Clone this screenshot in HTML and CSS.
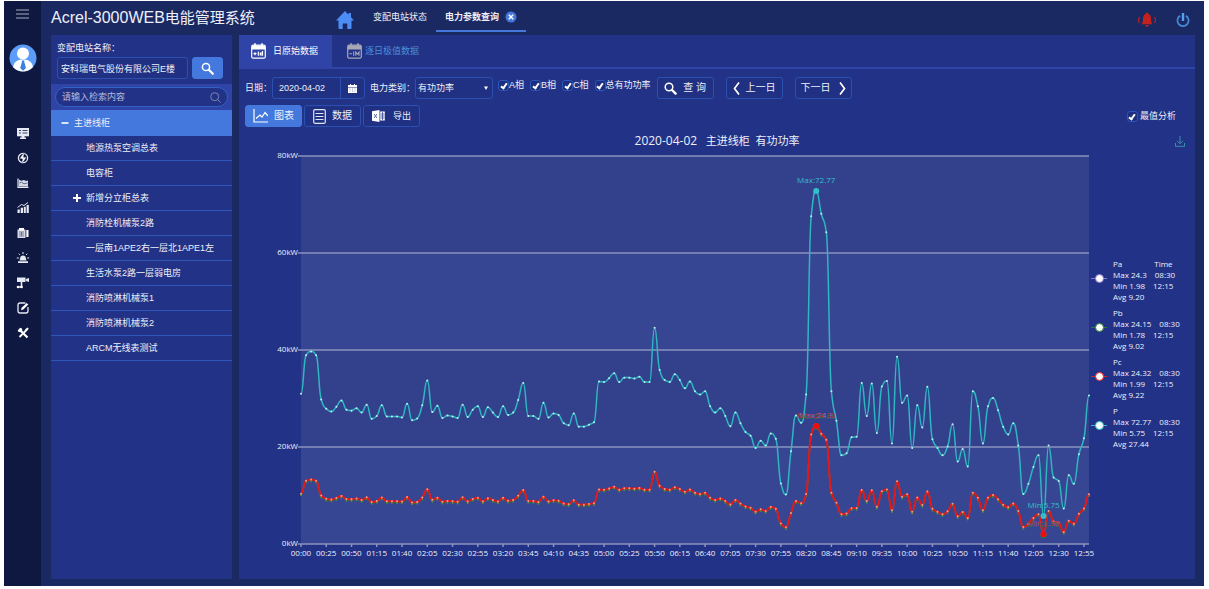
FILE: index.html
```html
<!DOCTYPE html>
<html lang="zh-CN">
<head>
<meta charset="utf-8">
<title>Acrel-3000WEB电能管理系统</title>
<link rel="stylesheet" href="styles.css">
</head>
<body>
<div class="app">
  <nav class="rail" aria-label="主导航">
    <button class="rail-menu" type="button" aria-label="菜单"><svg width="14" height="10" viewBox="0 0 14 10"><path d="M0 1h13M0 5h13M0 9h13" stroke="#a5abc0" stroke-width="1.2"/></svg></button>
    <a class="avatar" href="#" aria-label="用户"><svg width="28" height="28" viewBox="0 0 28 28"><defs><clipPath id="face"><circle cx="14" cy="14" r="13.5"/></clipPath></defs><circle cx="14" cy="14" r="13.5" fill="#5b9cf8"/><g clip-path="url(#face)"><circle cx="14" cy="9.500" r="6" fill="#fff"/><path d="M4 25c0-7 4-9.500 10-9.500s10 2.500 10 9.500l-4 4H8z" fill="#fff"/><path d="M13 16.500h2.200l.2 2 1.600 5.500-2.900 2.800-2.900-2.800 1.600-5.500z" fill="#3f7fe0"/></g></svg></a>
    <ul class="rail-list">
      <li><a href="#" aria-label="监控"><svg viewBox="0 0 14 14"><path d="M1 2h12v8.300H1z" fill="#e6e9f2"/><path d="M3 4.500h2M3 7h2M6.500 4.500h5M6.500 7h5" stroke="#39446e" stroke-width="1"/><path d="M5.500 10h3v1.500h1.500V13H4v-1.500h1.500z" fill="#e6e9f2"/></svg></a></li>
      <li><a href="#" aria-label="电力"><svg viewBox="0 0 14 14"><circle cx="7" cy="7" r="4.600" fill="none" stroke="#e6e9f2" stroke-width="1.300"/><path d="M8.300 1 3.500 7.800h3L5.700 13l4.800-6.800h-3z" fill="#fff" stroke="#0e1840" stroke-width=".3"/></svg></a></li>
      <li><a href="#" aria-label="曲线"><svg viewBox="0 0 14 14"><path d="M2 2.500v8.800h10.500" fill="none" stroke="#e6e9f2" stroke-width="1.200"/><path d="M3 3.500l2 1.200 3-.7 2 1 2-.5v6H3z" fill="#d4d8e5"/><path d="m3.500 7 2-.8 2.500 1.600L11.500 7" stroke="#48527a" fill="none" stroke-width=".8"/></svg></a></li>
      <li><a href="#" aria-label="统计"><svg viewBox="0 0 14 14"><path d="M1.500 8.500h2.300V12H1.500zM4.700 6.700H7V12H4.700zM7.800 5.700h2V12h-2zM10.600 4h2.200v8h-2.200z" fill="#e6e9f2"/><path d="m1.500 6.500 4-3 2.500 1L12 1.500" fill="none" stroke="#e6e9f2"/></svg></a></li>
      <li><a href="#" aria-label="报表"><svg viewBox="0 0 14 14"><path d="M1.500 3.500h8V12h-8z" fill="#d4d8e5"/><path d="M3 2h5v2.500H3zM10.300 4h2.200v7h-2.200z" fill="#fff"/><path d="M3 6h5M3 8h5M3 10h5M5.500 6v4" stroke="#525c83" stroke-width=".7"/></svg></a></li>
      <li><a href="#" aria-label="报警"><svg viewBox="0 0 14 14"><path d="M3.500 9.500 4.600 5.500Q7 3.500 9.400 5.500l1.100 4zM2 10.300h10V12H2z" fill="#e6e9f2"/><path d="M7 1v2M2.700 2.700l1.200 1.200M11.300 2.700l-1.200 1.200M.8 7h2M11.200 7h2" stroke="#e6e9f2"/></svg></a></li>
      <li><a href="#" aria-label="视频"><svg viewBox="0 0 14 14"><path d="M1 1.500h8.500v4.500H1zM10 3l3-1v4l-3-1z" fill="#e6e9f2"/><path d="M5.500 6v5H2" fill="none" stroke="#e6e9f2" stroke-width="1.600"/><circle cx="2" cy="11" r="1.300" fill="#fff"/><circle cx="5.500" cy="11" r="1.300" fill="#fff"/></svg></a></li>
      <li><a href="#" aria-label="编辑"><svg viewBox="0 0 14 14"><path d="M9.500 2H4Q2 2 2 4v6q0 2 2 2h6q2 0 2-2V6" fill="none" stroke="#e6e9f2" stroke-width="1.300"/><path d="m5 9.300.6-2.500L10.700 2l1.600 1.600-5 5z" fill="#fff"/></svg></a></li>
      <li><a href="#" aria-label="工具"><svg viewBox="0 0 14 14"><path d="m4 4 7.500 7.500" stroke="#fff" stroke-width="2.200"/><path d="M10.500 4 3.500 11" stroke="#fff" stroke-width="1.800"/><circle cx="4" cy="4" r="2.300" fill="#fff"/><path d="m1.300 3.700 2.400-2.400" stroke="#0e1840" stroke-width="1.400"/><path d="m9 3.500 2.500-2 1.200 1.200-2 2.500z" fill="#fff"/></svg></a></li>
    </ul>
  </nav>

  <div class="shell">
    <header class="topbar">
      <h1 class="brand">Acrel-3000WEB<span class="brand-cn">电能管理系统</span></h1>
      <div class="topbar-main">
        <a class="home" href="#" aria-label="首页"><svg width="18" height="18" viewBox="0 0 18 18"><path d="M9 0 0 9.500h2.500V17q0 1 1 1h3.200v-5.500h4.600V18h3.200q1 0 1-1V9.500H18l-3-3.200V2h-2.500v1.700z" fill="#4c8df6"/></svg></a>
        <nav class="pages">
          <a class="page" href="#">变配电站状态</a>
          <a class="page page-current" href="#">电力参数查询<svg width="12" height="12" viewBox="0 0 12 12"><circle cx="6" cy="6" r="5.500" fill="#4478dc"/><path d="m3.800 3.800 4.400 4.400M8.200 3.800 3.800 8.200" stroke="#fff" stroke-width="1.500"/></svg></a>
        </nav>
        <div class="topbar-tools">
          <button type="button" class="bare" aria-label="告警"><svg width="20" height="16" viewBox="0 0 20 16"><path d="M10 .5q1.300 0 1.300 1.200Q14 2.700 14 6.500q0 4 1.300 5.700H4.700Q6 10.500 6 6.500q0-3.800 2.700-4.800Q8.700.5 10 .5zM8.300 13h3.400q-.5 2-1.700 2t-1.700-2z" fill="#c2211d"/><path d="M2.300 5q-1.600 3 0 6M17.700 5q1.600 3 0 6" fill="none" stroke="#c2211d" stroke-width="1.200"/></svg></button>
          <button type="button" class="bare" aria-label="退出"><svg width="14" height="16" viewBox="0 0 14 16"><path d="M4.200 3.700a5.600 5.600 0 1 0 5.600 0" fill="none" stroke="#478bd8" stroke-width="1.700"/><path d="M7 1v8" stroke="#56a0ee" stroke-width="2.400"/></svg></button>
        </div>
      </div>
    </header>

    <div class="content">
      <aside class="side">
        <div class="station">
          <label for="station">变配电站名称：</label>
          <div class="station-row">
            <input id="station" class="field" type="text" value="安科瑞电气股份有限公司E楼">
            <button type="button" class="btn btn-on station-go" aria-label="搜索"><svg width="13" height="13" viewBox="0 0 13 13"><circle cx="5" cy="5" r="3.600" fill="none" stroke="#fff" stroke-width="1.500"/><path d="m7.800 7.800 4 4" stroke="#fff" stroke-width="2.200" stroke-linecap="round"/></svg></button>
          </div>
        </div>
        <div class="filter">
          <div class="filter-box">
            <input type="text" aria-label="检索" placeholder="请输入检索内容">
            <svg width="11" height="11" viewBox="0 0 11 11"><circle cx="4.700" cy="4.700" r="4" fill="none" stroke="#7d86a8"/><path d="m7.500 7.500 3 3" stroke="#7d86a8"/></svg>
          </div>
        </div>
        <ul class="tree">
          <li class="tree-root"><button type="button"><svg width="8" height="8" viewBox="0 0 8 8"><path d="M.5 4h7" stroke="#fff" stroke-width="1.600"/></svg>主进线柜</button></li>
          <li><button type="button">地源热泵空调总表</button></li>
          <li><button type="button">电容柜</button></li>
          <li class="tree-parent"><button type="button"><svg width="8" height="8" viewBox="0 0 8 8"><path d="M0 4h8M4 0v8" stroke="#fff" stroke-width="2"/></svg>新增分立柜总表</button></li>
          <li><button type="button">消防栓机械泵2路</button></li>
          <li><button type="button">一层南1APE2右一层北1APE1左</button></li>
          <li><button type="button">生活水泵2路一层弱电房</button></li>
          <li><button type="button">消防喷淋机械泵1</button></li>
          <li><button type="button">消防喷淋机械泵2</button></li>
          <li><button type="button">ARCM无线表测试</button></li>
        </ul>
      </aside>

      <main class="main">
        <div class="tabs">
          <button type="button" class="tab tab-on"><svg width="15" height="16" viewBox="0 0 15 16"><rect x=".7" y="2.200" width="13.600" height="13" rx="1.500" fill="none" stroke="#fff" stroke-width="1.200"/><path d="M1 2.500h13v4H1zM3.200.3h1.600v3H3.200zM10.200.3h1.600v3h-1.600z" fill="#fff"/><path d="M2.500 10.700h3M4 9.200v3M7.300 8.500v4.200M11.500 8v4.700M11.500 12H9.300v-1.800h2.200" fill="none" stroke="#fff" stroke-width="1.200"/></svg>日原始数据</button>
          <button type="button" class="tab"><svg width="15" height="16" viewBox="0 0 15 16"><rect x=".7" y="2.200" width="13.600" height="13" rx="1.500" fill="none" stroke="#a9a9b6" stroke-width="1.200"/><path d="M1 2.500h13v4H1zM3.200.3h1.600v3H3.200zM10.200.3h1.600v3h-1.600z" fill="#a9a9b6"/><path d="M2.500 10.700h2.500M6.700 8.500v4.200M8.800 12.700V9l1.600 2L12 9v3.700" fill="none" stroke="#a9a9b6" stroke-width="1.100"/></svg>逐日极值数据</button>
        </div>

        <form class="query" onsubmit="return false">
          <label for="day">日期：</label>
          <div class="date">
            <input id="day" type="text" value="2020-04-02">
            <button type="button" aria-label="选择日期"><svg width="9" height="9" viewBox="0 0 9 9"><path d="M0 1h9v2H0zM0 3.500h9V9H0zM2 0h1v1H2zM6 0h1v1H6z" fill="#fff"/><path d="M1.500 5h6M1.500 7h6" stroke="#8f9ac8" stroke-dasharray="1 1.500"/></svg></button>
          </div>
          <label class="kind-label" for="kind">电力类别：</label>
          <div class="kind">
            <select id="kind"><option>有功功率</option></select>
            <svg width="4" height="4" viewBox="0 0 4 4"><path d="M0 .5h4L2 4z" fill="#fff"/></svg>
          </div>
          <div class="checks">
            <label><input type="checkbox" checked>A相</label>
            <label><input type="checkbox" checked>B相</label>
            <label><input type="checkbox" checked>C相</label>
            <label><input type="checkbox" checked>总有功功率</label>
          </div>
          <div class="actions">
            <button type="submit" class="btn"><svg width="13" height="13" viewBox="0 0 13 13"><circle cx="5" cy="5" r="3.800" fill="none" stroke="#fff" stroke-width="1.500"/><path d="m8 8 3.600 3.600" stroke="#fff" stroke-width="2.400" stroke-linecap="round"/></svg>查 询</button>
            <button type="button" class="btn"><svg width="7" height="13" viewBox="0 0 7 13"><path d="M6 .5 1.500 6.500 6 12.500" fill="none" stroke="#fff" stroke-width="1.700"/></svg>上一日</button>
            <button type="button" class="btn btn-next">下一日<svg width="7" height="13" viewBox="0 0 7 13"><path d="m1 .5 4.500 6L1 12.500" fill="none" stroke="#fff" stroke-width="1.700"/></svg></button>
          </div>
        </form>

        <div class="views">
          <button type="button" class="btn btn-on btn-big"><svg width="15" height="14" viewBox="0 0 15 14"><path d="M1 0v13h14" fill="none" stroke="#fff" stroke-width="1.200"/><path d="m3 9.500 4-3.500 2 2 3-4.500L15 7" fill="none" stroke="#fff" stroke-width="1.200"/></svg>图表</button>
          <button type="button" class="btn btn-big"><svg width="13" height="15" viewBox="0 0 13 15"><rect x=".7" y=".7" width="11.600" height="13.600" rx="1.200" fill="none" stroke="#dfe3f3" stroke-width="1.200"/><path d="M2.500 4.500h8M2.500 7.500h8M2.500 10.500h8" stroke="#dfe3f3"/></svg>数据</button>
          <button type="button" class="btn btn-export"><svg width="13" height="12" viewBox="0 0 13 12"><path d="M0 1.200 7.500 0v12L0 10.800zM8.200 1.500h4.600v9H8.200z" fill="#fff"/><path d="m2 4 3 4M5 4 2 8M8.500 4h4M8.500 6h4M8.500 8h4M10.500 2v8" stroke="#3a4a98" stroke-width=".8"/></svg>导出</button>
          <label class="extremes"><input type="checkbox" checked>最值分析</label>
        </div>

        <div class="chart-head">
          <h2><span class="chart-date">2020-04-02</span>&nbsp;&nbsp; 主进线柜&nbsp;&nbsp;有功功率</h2>
          <button type="button" class="bare" aria-label="保存图片"><svg width="10" height="11" viewBox="0 0 10 11"><path d="M5 0v7.500M2 4.800l3 3 3-3M.5 7v3.300h9V7" fill="none" stroke="#3a8fae"/></svg></button>
        </div>
        <div class="chart-body">
          <div class="plot"><svg id="plot" role="img" aria-label="有功功率曲线"></svg></div>
          <div class="legend">
            <section class="series series-pa"><i></i><p>Pa<span class="time-head">Time</span></p><p>Max 24.3<span>08:30</span></p><p>Min 1.98<span>12:15</span></p><p>Avg 9.20</p></section>
            <section class="series series-pb"><i></i><p>Pb</p><p>Max 24.15<span>08:30</span></p><p>Min 1.78<span>12:15</span></p><p>Avg 9.02</p></section>
            <section class="series series-pc"><i></i><p>Pc</p><p>Max 24.32<span>08:30</span></p><p>Min 1.99<span>12:15</span></p><p>Avg 9.22</p></section>
            <section class="series series-p"><i></i><p>P</p><p>Max 72.77<span>08:30</span></p><p>Min 5.75<span>12:15</span></p><p>Avg 27.44</p></section>
          </div>
        </div>
      </main>
    </div>
  </div>
</div>
<script src="chart.js"></script>
</body>
</html>
```
FILE: styles.css
```css
*, ::before { box-sizing: border-box; }
html, body { height: 100%; }
body {
  margin: 0;
  padding: 1px 5px 3px 4px;
  background: #fff;
  color: #eef0f9;
  font: 9px/12px "Liberation Sans", "Noto Sans CJK SC", sans-serif;
}
ul { list-style: none; margin: 0; padding: 0; }
h1, h2, p { margin: 0; font-weight: normal; }
a { color: inherit; text-decoration: none; }
button, input, select { font: inherit; color: inherit; margin: 0; }
button { cursor: pointer; white-space: nowrap; }
svg { flex: none; display: block; }
.bare { padding: 0; border: 0; background: none; }

.app { display: flex; min-height: 100%; background: #1b2963; }

.rail {
  flex: none;
  width: 37px;
  background: #0e1840;
  display: flex;
  flex-direction: column;
  align-items: center;
}
.rail-menu { border: 0; padding: 0; background: none; margin-top: 8px; }
.avatar { margin-top: 25px; }
.rail-list { margin-top: 48px; }
.rail-list a { display: flex; align-items: center; height: 25px; }
.rail-list svg { width: 14px; height: 14px; }

.shell { flex: 1; min-width: 0; display: flex; flex-direction: column; }
.topbar { display: flex; height: 34px; padding: 0 14px 0 10px; }
.brand { width: 285px; font-size: 16px; line-height: 34px; white-space: nowrap; }
.brand-cn { font-size: 15px; }
.topbar-main { flex: 1; display: flex; align-items: flex-start; }
.home { margin-top: 10px; }
.pages { display: flex; margin-left: 10px; }
.page { display: flex; align-items: center; gap: 6px; height: 31px; padding: 0 9px; }
.page-current { border-bottom: 2px solid #4478dc; padding-top: 2px; font-weight: bold; }
.topbar-tools { margin: 11px 0 0 auto; display: flex; gap: 19px; }

.content { flex: 1; display: flex; gap: 7px; padding: 0 9px 7px 10px; }
.side { flex: none; width: 181px; background: #223286; }
.station { padding: 7px 9px 5px 6px; }
.station label { display: block; line-height: 12px; }
.station-row { display: flex; gap: 4px; margin-top: 3px; }
.field, .btn, .date, .kind {
  height: 22px;
  border: 1px solid #2c50b0;
  border-radius: 3px;
  background: #203082;
}
.field { flex: 1; min-width: 0; padding: 0 3px; }
.btn { display: flex; align-items: center; justify-content: center; gap: 6px; width: 57px; padding: 0; }
.btn-on { background: #4478dc; border-color: #4478dc; }
.station-go { width: 31px; }
.filter { padding: 3px 4px; background: #3043a7; }
.filter-box {
  display: flex;
  align-items: center;
  height: 20px;
  padding: 0 6px;
  border: 1px solid #2f62c4;
  border-radius: 10px;
  background: #223286;
}
.filter-box input { flex: 1; min-width: 0; padding: 0; border: 0; background: none; outline: 0; }
.filter-box input::placeholder { color: #b4bbdc; opacity: 1; }
.tree li { height: 25px; border-bottom: 1px solid #2f56b9; padding-left: 35px; }
.tree button { display: flex; align-items: center; gap: 5px; height: 24px; padding: 0; border: 0; background: none; }
.tree .tree-root { height: 26px; padding-left: 10px; background: #4478dc; border: 0; }
.tree-root button { height: 26px; }
.tree .tree-parent { padding-left: 22px; }

.main { flex: 1; min-width: 0; display: flex; flex-direction: column; background: #223286; }
.tabs { display: flex; height: 34px; border-bottom: 2px solid #3043a7; }
.tab { display: flex; align-items: center; gap: 7px; padding: 0 14px 0 12px; border: 0; background: none; color: #4a90d8; }
.tab + .tab { gap: 3px; padding-left: 15px; }
.tab-on { color: #fff; background: #3043a7; }

.query { display: flex; align-items: center; height: 22px; margin: 8px 6px 0; white-space: nowrap; }
.date { display: flex; width: 93px; }
.date input { flex: 1; min-width: 0; padding: 0 6px; border: 0; background: none; }
.date button { width: 24px; padding: 0 7px; border: 0; border-left: 1px solid #2c50b0; background: none; }
.kind-label { margin-left: 5px; }
.kind { width: 78px; display: grid; align-items: center; }
.kind select { grid-area: 1 / 1; appearance: none; width: 100%; height: 20px; padding: 0 2px; border: 0; background: none; }
.kind svg { grid-area: 1 / 1; justify-self: end; margin-right: 4px; pointer-events: none; }
.checks { display: flex; gap: 6px; margin: 0 0 6px 5px; }
.checks label, .extremes { display: flex; align-items: center; }
input[type="checkbox"] {
  appearance: none;
  width: 11px;
  height: 11px;
  margin: 0;
  border: 1px solid #2c55b8;
  border-radius: 3px;
  background: #1e2e7e;
  display: grid;
  place-items: center;
}
input[type="checkbox"]:checked::before {
  content: "";
  width: 4px;
  height: 7px;
  border: solid #fff;
  border-width: 0 2px 2px 0;
  transform: rotate(35deg);
}
.actions { display: flex; gap: 12px; margin-left: 6px; font-size: 10px; }
.btn-next { gap: 8px; }
.views { display: flex; align-items: center; gap: 2px; margin: 6px 19px 0 6px; }
.btn-big { font-size: 10px; }
.btn-export { gap: 8px; }
.extremes { margin-left: auto; gap: 2px; }

.chart-head { display: flex; align-items: center; height: 22px; padding: 6px 10px 0 20px; }
.chart-head h2 { flex: 1; text-align: center; font: 11px/16px "Open Sans", "Noto Sans CJK SC", sans-serif; }
.chart-head .chart-date { font-size: 12px; }
.chart-body { flex: 1; display: flex; min-height: 240px; }
.plot { flex: 1; min-width: 0; display: grid; }
.plot svg { width: 100%; height: 100%; overflow: visible; font: 8px "Open Sans", sans-serif; }

.legend {
  flex: none;
  width: 104px;
  display: flex;
  flex-direction: column;
  justify-content: center;
  gap: 5px;
  padding: 0 0 22px 22px;
  font: 8px/11px "Open Sans", sans-serif;
  white-space: nowrap;
}
.series { position: relative; --mark: #2fbcc2; }
.series span { margin-left: 8px; }
.series .time-head { margin-left: 32px; }
.series i {
  position: absolute;
  left: -22px;
  top: 20px;
  width: 16px;
  height: 1px;
  background: var(--mark);
}
.series i::before {
  content: "";
  position: absolute;
  left: 4px;
  top: -4px;
  width: 9px;
  height: 9px;
  border: 1px solid var(--mark);
  border-radius: 50%;
  background: #fff;
}
.series-pa { --mark: #8d76c8; }
.series-pb { --mark: #2b7a3a; }
.series-pc { --mark: #e0211f; }

.band { fill: #374692; }
.band-dark { fill: #33418d; }
.grid-line { stroke: #8b93be; stroke-width: 1.5; }
.axis-label { fill: #eef0f9; }
.curve { fill: none; stroke-width: 1.5; }
.curve-pa { stroke: #8d76c8; }
.curve-pb { stroke: #2b7a3a; }
.curve-pc { stroke: #e0161a; stroke-width: 2; }
.curve-p { stroke: #2fb6c0; }
.dot-p { fill: #b5f2f1; }
.dot-pb { fill: #4f8a3c; }
.dot-pc { fill: #f0a090; }
.mark-p { fill: #2fc0c8; }
.mark-pa { fill: #8d76c8; }
.mark-pb { fill: #2b7a3a; }
.mark-pc { fill: #f50a0a; }
.tag-pc { fill: #b8283a; }
```
FILE: chart.js
```javascript
const total = [
  31.0, 38.9, 39.7, 38.9, 29.8, 27.9, 27.3, 28.3, 29.6, 27.7, 27.5, 28.0, 27.1,
  28.7, 25.8, 26.4, 28.6, 26.3, 26.3, 26.3, 26.1, 28.9, 25.5, 25.9, 28.6, 33.7,
  27.2, 28.5, 26.0, 26.5, 26.3, 26.0, 28.7, 26.2, 27.7, 28.4, 26.2, 28.2, 27.1,
  26.2, 28.4, 26.6, 27.1, 29.7, 33.2, 26.4, 26.4, 25.8, 29.1, 26.1, 26.9, 26.6,
  24.9, 24.5, 26.9, 24.2, 24.2, 24.6, 25.1, 33.5, 33.4, 34.2, 35.2, 33.4, 34.3,
  34.3, 34.1, 34.5, 33.4, 33.4, 44.6, 35.9, 33.8, 33.4, 35.0, 33.8, 32.1, 33.5,
  31.5, 30.8, 31.5, 28.4, 27.1, 28.0, 26.4, 24.3, 27.1, 24.9, 23.1, 22.3, 19.8,
  21.3, 20.3, 22.8, 21.7, 12.5, 10.2, 19.1, 26.5, 25.0, 30.8, 67.6, 72.77, 68.1,
  64.3, 31.5, 25.4, 18.3, 18.7, 22.0, 22.1, 33.2, 26.4, 33.1, 22.9, 32.5, 33.6,
  20.7, 38.6, 29.1, 30.6, 19.8, 28.6, 24.0, 32.4, 21.6, 19.8, 18.3, 20.1, 24.7,
  17.0, 19.6, 16.0, 31.5, 28.4, 20.7, 28.4, 30.1, 27.6, 24.2, 22.6, 24.9, 20.3,
  10.3, 12.4, 15.9, 18.3, 5.75, 20.3, 13.7, 13.0, 7.3, 14.2, 12.4, 18.5, 21.8, 30.6
];
const phases = {
  pa: total.map(v => v / 3),
  pb: total.map(v => v / 3 - 0.1),
  pc: total.map(v => v / 3 + 0.05),
  p: total
};
const svg = document.getElementById("plot");

function node(name, attrs, text) {
  const el = document.createElementNS("http://www.w3.org/2000/svg", name);
  for (const key in attrs) el.setAttribute(key, attrs[key]);
  if (text) el.textContent = text;
  svg.appendChild(el);
}

// Smooth curve whose tangents are flat at every local peak and trough.
function smooth(pts) {
  const slope = pts.map((p, i) => {
    const a = pts[i - 1], b = pts[i + 1];
    if (!a || !b) return 0;
    const l = (p[1] - a[1]) / (p[0] - a[0]);
    const r = (b[1] - p[1]) / (b[0] - p[0]);
    return l * r <= 0 ? 0 : 2 * l * r / (l + r);
  });
  let d = "M" + pts[0].map(v => v.toFixed(1));
  for (let i = 1; i < pts.length; i++) {
    const a = pts[i - 1], b = pts[i], h = (b[0] - a[0]) / 2;
    d += "C" + [a[0] + h, a[1] + h * slope[i - 1], b[0] - h, b[1] - h * slope[i], b[0], b[1]]
      .map(v => v.toFixed(1)).join(" ");
  }
  return d;
}

function draw() {
  svg.replaceChildren();
  const box = svg.parentNode.getBoundingClientRect();
  const left = 62, right = box.width - 2, top = 7, bottom = box.height - 35;
  const x = i => left + (right - left) * i / (total.length - 1);
  const y = v => bottom - (bottom - top) * v / 80;

  for (let v = 0; v < 80; v += 20) {
    node("rect", { class: v % 40 ? "band-dark" : "band", x: left, y: y(v + 20), width: right - left, height: y(v) - y(v + 20) });
  }
  for (let v = 0; v <= 80; v += 20) {
    node("line", { class: "grid-line", x1: left - 3, x2: right, y1: y(v), y2: y(v) });
    node("text", { class: "axis-label", x: left - 3, y: y(v) + 2, "text-anchor": "end" }, v + "kW");
  }
  for (let i = 0; i < total.length; i += 5) {
    const m = i * 5;
    const label = String(Math.floor(m / 60)).padStart(2, "0") + ":" + String(m % 60).padStart(2, "0");
    node("line", { class: "grid-line", x1: x(i), x2: x(i), y1: bottom, y2: bottom + 3 });
    node("text", { class: "axis-label", x: x(i), y: bottom + 12, "text-anchor": "middle" }, label);
  }
  for (const key of ["pa", "pb", "pc", "p"]) {
    const pts = phases[key].map((v, i) => [x(i), y(v)]);
    node("path", { class: "curve curve-" + key, d: smooth(pts) });
    if (key !== "pa") pts.forEach(p => node("circle", { class: "dot-" + key, cx: p[0], cy: p[1] + (key === "pb" ? 1 : 0), r: 1 }));
  }
  const marks = [
    ["pa", 102, 24.3, "Max:24.3"], ["pb", 102, 24.15, "Max:24.15"], ["pc", 102, 24.32, "Max:24.32"], ["p", 102, 72.77, "Max:72.77"],
    ["pa", 147, 1.98, "Min:1.98"], ["pb", 147, 1.78, "Min:1.78"], ["pc", 147, 1.99, "Min:1.99"], ["p", 147, 5.75, "Min:5.75"]
  ];
  for (const [key, i, v, label] of marks) {
    node("circle", { class: "mark-" + key, cx: x(i), cy: y(v), r: 3 });
    node("text", { class: key === "pc" ? "tag-pc" : "mark-" + key, x: x(i), y: y(v) - 8, "text-anchor": "middle" }, label);
  }
}
draw();
window.addEventListener("resize", draw);
```
